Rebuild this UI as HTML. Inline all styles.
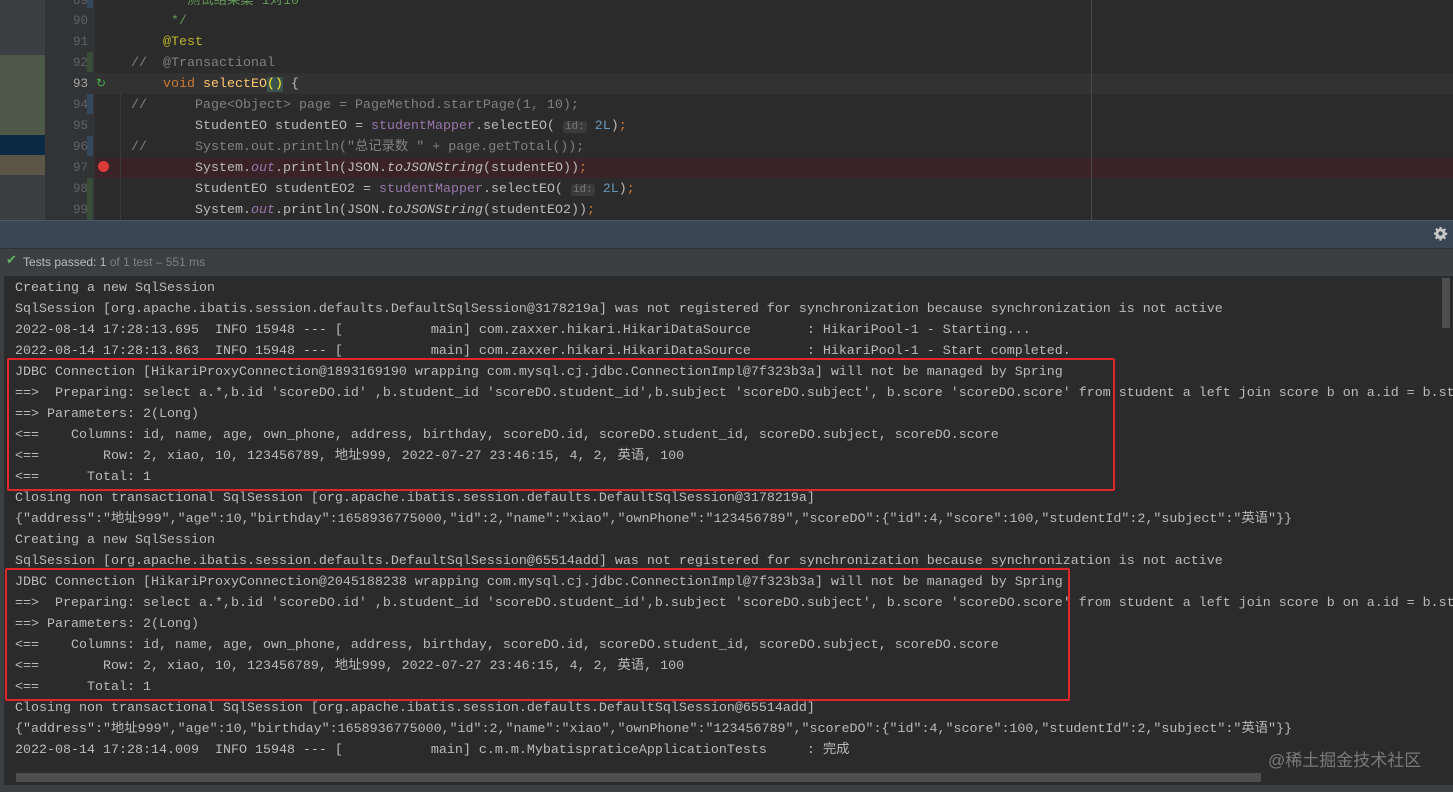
<!DOCTYPE html>
<html><head><meta charset="utf-8"><style>
*{margin:0;padding:0;box-sizing:border-box}
body{width:1453px;height:792px;overflow:hidden;background:#2b2b2b;position:relative;font-family:"Liberation Mono","Noto Sans CJK SC",monospace;font-size:13.33px;color:#bbbbbb}
.abs{position:absolute}
.ln{position:absolute;left:45px;width:43px;text-align:right;color:#606366;font-size:12.5px}
.cl{position:absolute;left:163px;white-space:pre;height:21px;line-height:21px}
.kw{color:#cc7832}.an{color:#bbb529}.cm{color:#808080}.pu{color:#9876aa}.nu{color:#6897bb}.fn{color:#ffc66d}.it{font-style:italic}
.hint{background:#3b3b3b;color:#787878;font-size:11px;padding:0 2px;border-radius:3px}
.con{position:absolute;left:15px;white-space:pre;line-height:21px;height:21px}
.box{position:absolute;border:2px solid #e0272b;border-radius:2px}
.ed{position:absolute;left:0;top:1px;width:1453px;height:220px}
</style></head><body>
<!-- left strip -->
<div class="abs" style="left:0;top:0;width:45px;height:220px;background:#3c3f41"></div>
<div class="abs" style="left:0;top:55px;width:45px;height:80px;background:#4d5849"></div>
<div class="abs" style="left:0;top:135px;width:45px;height:20px;background:#0d2a44"></div>
<div class="abs" style="left:0;top:155px;width:45px;height:20px;background:#5a5547"></div>
<div class="abs" style="left:45px;top:0;width:50px;height:220px;background:#313335"></div>
<div class="abs" style="left:87px;top:0;width:6px;height:8px;background:#34495e"></div>
<div class="abs" style="left:87px;top:52px;width:6px;height:20px;background:#384c38"></div>
<div class="abs" style="left:87px;top:94px;width:6px;height:20px;background:#34495e"></div>
<div class="abs" style="left:87px;top:136px;width:6px;height:20px;background:#34495e"></div>
<div class="abs" style="left:87px;top:178px;width:6px;height:42px;background:#384c38"></div>
<div class="abs" style="left:95px;top:73px;width:1358px;height:21px;background:#323232"></div>
<div class="abs" style="left:95px;top:157px;width:1358px;height:21px;background:#3a2326"></div>
<div class="abs" style="left:1091px;top:0;width:1px;height:220px;background:#4a4a4a"></div>
<div class="abs" style="left:120px;top:94px;width:1px;height:126px;background:#3a3a3a"></div>
<div class="abs" style="left:98px;top:161px;width:11px;height:11px;border-radius:50%;background:#db3b3b"></div>
<div class="abs" style="left:96px;top:76px;color:#4caf50;font-size:12px">↻</div>
<div class="ed">
<div class="ln" style="top:-10px;line-height:21px">89</div>
<div class="ln" style="top:10px;line-height:21px">90</div>
<div class="ln" style="top:31px;line-height:21px">91</div>
<div class="ln" style="top:52px;line-height:21px">92</div>
<div class="ln" style="top:73px;line-height:21px;color:#a4a3a3">93</div>
<div class="ln" style="top:94px;line-height:21px">94</div>
<div class="ln" style="top:115px;line-height:21px">95</div>
<div class="ln" style="top:136px;line-height:21px">96</div>
<div class="ln" style="top:157px;line-height:21px">97</div>
<div class="ln" style="top:178px;line-height:21px">98</div>
<div class="ln" style="top:199px;line-height:21px">99</div>
<div class="cl cm" style="top:-10px;left:171px;color:#629755">* 测试结果集 1对10</div>
<div class="cl" style="top:10px;left:171px;color:#629755">*/</div>
<div class="cl an" style="top:31px">@Test</div>
<div class="cl cm" style="top:52px;left:131px">//  @Transactional</div>
<div class="cl" style="top:73px"><span class="kw">void</span> <span class="fn">selectEO</span><span style="background:#3b514d;color:#ffef28">()</span> {</div>
<div class="cl cm" style="top:94px;left:131px">//      Page&lt;Object&gt; page = PageMethod.startPage(1, 10);</div>
<div class="cl" style="top:115px;left:195px">StudentEO studentEO = <span class="pu">studentMapper</span>.selectEO( <span class="hint">id:</span> <span class="nu">2L</span>)<span class="kw">;</span></div>
<div class="cl cm" style="top:136px;left:131px">//      System.out.println("总记录数 " + page.getTotal());</div>
<div class="cl" style="top:157px;left:195px">System.<span class="pu it">out</span>.println(JSON.<span class="it">toJSONString</span>(studentEO))<span class="kw">;</span></div>
<div class="cl" style="top:178px;left:195px">StudentEO studentEO2 = <span class="pu">studentMapper</span>.selectEO( <span class="hint">id:</span> <span class="nu">2L</span>)<span class="kw">;</span></div>
<div class="cl" style="top:199px;left:195px">System.<span class="pu it">out</span>.println(JSON.<span class="it">toJSONString</span>(studentEO2))<span class="kw">;</span></div>
</div>
<!-- bars -->
<div class="abs" style="left:0;top:220px;width:1453px;height:28px;background:#3a4654;border-top:1px solid #4b5a6a"></div>
<svg class="abs" style="left:1433px;top:226px" width="15" height="15" viewBox="0 0 16 16"><path fill="#c8c8c8" d="M7 1h2l.4 2 1.4.6 1.7-1.2 1.4 1.4-1.2 1.7.6 1.4 2 .4v2l-2 .4-.6 1.4 1.2 1.7-1.4 1.4-1.7-1.2-1.4.6-.4 2H7l-.4-2-1.4-.6-1.700 1.2-1.4-1.4 1.2-1.7L2.7 9.4 1 9V7l2-.4.6-1.4-1.2-1.7 1.4-1.4 1.7 1.2L6.6 3z"/><circle cx="8" cy="8" r="2.3" fill="#3a4654"/></svg>
<div class="abs" style="left:0;top:248px;width:1453px;height:28px;background:#3c3f41;border-top:1px solid #323232"></div>
<div class="abs" style="left:6px;top:253px;color:#5fb85f;font-size:13px">✔</div>
<div class="abs" style="left:23px;top:255px;font-family:'Liberation Sans',sans-serif;font-size:12px;color:#bbbbbb">Tests passed: 1 <span style="color:#808080">of 1 test – 551 ms</span></div>
<!-- console -->
<div class="abs" style="left:0;top:276px;width:4px;height:510px;background:#3c3f41"></div>
<div class="con" style="top:278px">Creating a new SqlSession</div>
<div class="con" style="top:299px">SqlSession [org.apache.ibatis.session.defaults.DefaultSqlSession@3178219a] was not registered for synchronization because synchronization is not active</div>
<div class="con" style="top:320px">2022-08-14 17:28:13.695  INFO 15948 --- [           main] com.zaxxer.hikari.HikariDataSource       : HikariPool-1 - Starting...</div>
<div class="con" style="top:341px">2022-08-14 17:28:13.863  INFO 15948 --- [           main] com.zaxxer.hikari.HikariDataSource       : HikariPool-1 - Start completed.</div>
<div class="con" style="top:362px">JDBC Connection [HikariProxyConnection@1893169190 wrapping com.mysql.cj.jdbc.ConnectionImpl@7f323b3a] will not be managed by Spring</div>
<div class="con" style="top:383px">==>  Preparing: select a.*,b.id 'scoreDO.id' ,b.student_id 'scoreDO.student_id',b.subject 'scoreDO.subject', b.score 'scoreDO.score' from student a left join score b on a.id = b.student_id</div>
<div class="con" style="top:404px">==> Parameters: 2(Long)</div>
<div class="con" style="top:425px">&lt;==    Columns: id, name, age, own_phone, address, birthday, scoreDO.id, scoreDO.student_id, scoreDO.subject, scoreDO.score</div>
<div class="con" style="top:446px">&lt;==        Row: 2, xiao, 10, 123456789, 地址999, 2022-07-27 23:46:15, 4, 2, 英语, 100</div>
<div class="con" style="top:467px">&lt;==      Total: 1</div>
<div class="con" style="top:488px">Closing non transactional SqlSession [org.apache.ibatis.session.defaults.DefaultSqlSession@3178219a]</div>
<div class="con" style="top:509px">{"address":"地址999","age":10,"birthday":1658936775000,"id":2,"name":"xiao","ownPhone":"123456789","scoreDO":{"id":4,"score":100,"studentId":2,"subject":"英语"}}</div>
<div class="con" style="top:530px">Creating a new SqlSession</div>
<div class="con" style="top:551px">SqlSession [org.apache.ibatis.session.defaults.DefaultSqlSession@65514add] was not registered for synchronization because synchronization is not active</div>
<div class="con" style="top:572px">JDBC Connection [HikariProxyConnection@2045188238 wrapping com.mysql.cj.jdbc.ConnectionImpl@7f323b3a] will not be managed by Spring</div>
<div class="con" style="top:593px">==>  Preparing: select a.*,b.id 'scoreDO.id' ,b.student_id 'scoreDO.student_id',b.subject 'scoreDO.subject', b.score 'scoreDO.score' from student a left join score b on a.id = b.student_id</div>
<div class="con" style="top:614px">==> Parameters: 2(Long)</div>
<div class="con" style="top:635px">&lt;==    Columns: id, name, age, own_phone, address, birthday, scoreDO.id, scoreDO.student_id, scoreDO.subject, scoreDO.score</div>
<div class="con" style="top:656px">&lt;==        Row: 2, xiao, 10, 123456789, 地址999, 2022-07-27 23:46:15, 4, 2, 英语, 100</div>
<div class="con" style="top:677px">&lt;==      Total: 1</div>
<div class="con" style="top:698px">Closing non transactional SqlSession [org.apache.ibatis.session.defaults.DefaultSqlSession@65514add]</div>
<div class="con" style="top:719px">{"address":"地址999","age":10,"birthday":1658936775000,"id":2,"name":"xiao","ownPhone":"123456789","scoreDO":{"id":4,"score":100,"studentId":2,"subject":"英语"}}</div>
<div class="con" style="top:740px">2022-08-14 17:28:14.009  INFO 15948 --- [           main] c.m.m.MybatispraticeApplicationTests     : 完成</div>
<div class="box" style="left:7px;top:358px;width:1108px;height:133px"></div>
<div class="box" style="left:5px;top:568px;width:1065px;height:133px"></div>
<div class="abs" style="left:1442px;top:278px;width:8px;height:50px;background:#4e4e4e"></div>
<div class="abs" style="left:16px;top:773px;width:1245px;height:9px;background:#4e4e4e"></div>
<div class="abs" style="left:0;top:785px;width:1453px;height:7px;background:#3c3f41"></div>
<div class="abs" style="left:1268px;top:746px;font-family:'Liberation Sans','Noto Sans CJK SC',sans-serif;font-size:17px;color:#7a7a7a">@稀土掘金技术社区</div>
</body></html>
